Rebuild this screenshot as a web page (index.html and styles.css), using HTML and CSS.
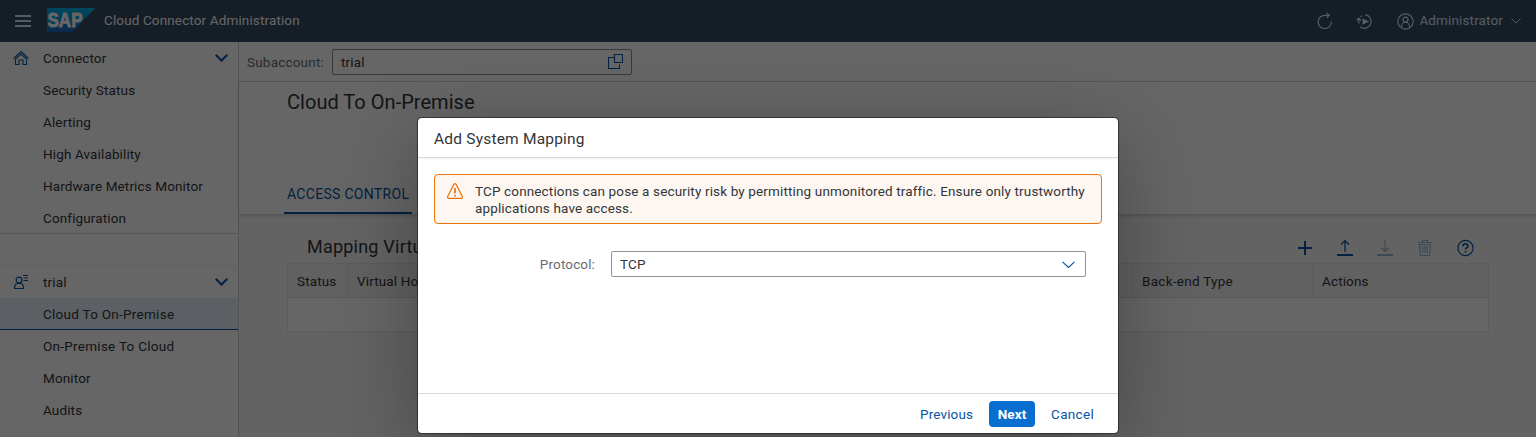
FILE: index.html
```html
<!DOCTYPE html>
<html lang="en">
<head>
<meta charset="utf-8">
<title>Cloud Connector Administration</title>
<link rel="stylesheet" href="styles.css">
</head>
<body>
<div class="app">
  <header class="shell">
    <svg class="menu" width="16" height="13" viewBox="0 0 16 13"><path d="M0 1h16M0 6h16M0 11h16" stroke="#d1e8ff" stroke-width="2"/></svg>
    <svg class="logo" width="49" height="24" viewBox="0 0 49 24">
      <defs><linearGradient id="sap" x1="0" y1="0" x2="0" y2="1"><stop offset="0" stop-color="#00b1eb"/><stop offset=".5" stop-color="#009ad9"/><stop offset="1" stop-color="#1e5fbb"/></linearGradient></defs>
      <path d="M0 0H48.500L25 24H0z" fill="url(#sap)"/>
      <text x="0.500" y="18.800" textLength="35" lengthAdjust="spacingAndGlyphs" class="logo-text">SAP</text>
    </svg>
    <span class="shell-title">Cloud Connector Administration</span>
    <div class="shell-end">
      <svg class="refresh" width="16" height="18" viewBox="0 0 16 18" fill="none" stroke="#d1e8ff" stroke-width="1.200"><path d="M14.300 9.500A6.600 6.600 0 1 1 7.700 3.300H12M9.700.800 12.200 3.300 9.700 5.800"/></svg>
      <svg class="replay" width="17" height="17" viewBox="0 0 17 17" fill="none" stroke="#d1e8ff" stroke-width="1.200"><path d="M9 1.700A6.800 6.800 0 1 1 4 13.700M2.800 5v5.500M.7 7.500l2.100-2.300 2.100 2.300M4.500 3.700l1.500-1"/><path d="M6.500 5.200 13 8.500 6.500 11.800z" fill="#d1e8ff" stroke="none"/></svg>
      <svg class="user" width="17" height="17" viewBox="0 0 17 17" fill="none" stroke="#d1e8ff" stroke-width="1.200"><circle cx="8.500" cy="8.500" r="7.700"/><circle cx="8.500" cy="6.700" r="2.500"/><path d="M4.500 14.200c0-3 1.800-5 4-5s4 2 4 5"/></svg>
      <span>Administrator</span>
      <svg class="caret" width="10" height="6" viewBox="0 0 10 6" fill="none" stroke="#d1e8ff"><path d="M.5.500 5 5 9.500.500"/></svg>
    </div>
  </header>
  <div class="body">
    <nav class="side">
      <div class="item top">
        <svg width="16" height="16" viewBox="0 0 16 16" fill="none" stroke="#0854a0" stroke-width="1.100"><path d="M.5 8.500 8 1.500l7.500 7M2.500 9v5.500h3.500V10h4v4.500h3.500V9L8 4z"/></svg>
        <span>Connector</span>
        <svg width="13" height="8" viewBox="0 0 13 8" fill="none" stroke="#0854a0" stroke-width="2"><path d="M.7.800 6.500 6.500 12.300.800"/></svg>
      </div>
      <div class="item">Security Status</div>
      <div class="item">Alerting</div>
      <div class="item">High Availability</div>
      <div class="item">Hardware Metrics Monitor</div>
      <div class="item last">Configuration</div>
      <div class="gap"></div>
      <div class="item top">
        <svg width="16" height="16" viewBox="0 0 16 16" fill="none" stroke="#0854a0" stroke-width="1.200"><circle cx="6" cy="6" r="2.900"/><path d="M1.500 14.500c0-3.400 1.800-4.800 2.700-5h3.600c.9.200 2.700 1.600 2.700 5zM10 1.500h5M10.500 4h4.500M10.500 6.500h4.500"/></svg>
        <span>trial</span>
        <svg width="13" height="8" viewBox="0 0 13 8" fill="none" stroke="#0854a0" stroke-width="2"><path d="M.7.800 6.500 6.500 12.300.800"/></svg>
      </div>
      <div class="item wide selected">Cloud To On-Premise</div>
      <div class="item wide">On-Premise To Cloud</div>
      <div class="item">Monitor</div>
      <div class="item">Audits</div>
    </nav>
    <main class="main">
      <div class="subbar">
        <span class="label sub-label">Subaccount:</span>
        <div class="input sub"><span>trial</span>
          <svg width="15" height="15" viewBox="0 0 15 15" fill="none" stroke="#0854a0"><path d="M6.500.500h8v8h-8zM6.500 3.500h-6v11h11v-4" stroke-width="1.100"/></svg>
        </div>
      </div>
      <div class="pagehead">
        <h1>Cloud To On-Premise</h1>
        <div class="tab">ACCESS CONTROL</div>
      </div>
      <section class="content">
        <div class="toolbar">
          <h2>Mapping Virtual To Internal System</h2>
          <div class="tools">
            <svg width="16" height="18" viewBox="0 0 16 18" stroke="#0854a0" stroke-width="2"><path d="M1 9h14M8 2v14"/></svg>
            <svg width="16" height="18" viewBox="0 0 16 18" fill="none" stroke="#0854a0"><path d="M8 13V1.500M4 5.500l4-4 4 4" stroke-width="1.200"/><path d="M0 16h16" stroke-width="2"/></svg>
            <svg class="off" width="16" height="18" viewBox="0 0 16 18" fill="none" stroke="#0854a0"><path d="M8 1v11.500M4 8.500l4 4 4-4" stroke-width="1.200"/><path d="M0 16h16" stroke-width="2"/></svg>
            <svg class="off" width="16" height="18" viewBox="0 0 16 18" fill="none" stroke="#0854a0" stroke-width="1.200"><path d="M1 3.500h14M5.500 3.500v-2h5v2M2.500 5.500l1 11h9l1-11zM5.500 7l.5 7M8 7v7M10.500 7l-.5 7"/></svg>
            <svg width="17" height="18" viewBox="0 0 17 18" fill="none" stroke="#0854a0" stroke-width="1.200"><circle cx="8.500" cy="9" r="7.600"/><path d="M6 7.200c0-3.300 5-3.200 5-.3 0 1.800-2.500 1.800-2.500 3.700M8.500 12v1.500" stroke-width="1.600"/></svg>
          </div>
        </div>
        <div class="table">
          <div class="thead"><span>Status</span><span>Virtual Host</span><span class="wide">Back-end Type</span><span>Actions</span></div>
          <div class="trow"></div>
        </div>
      </section>
    </main>
  </div>
</div>
<div class="overlay">
  <div class="dialog">
    <div class="dlg-head">Add System Mapping</div>
    <div class="dlg-body">
      <div class="strip">
        <svg width="16" height="16" viewBox="0 0 16 16" fill="none" stroke="#e9730c"><path d="M7 1.200Q8 .2 9 1.200L15.300 13.500Q15.700 15.300 14.300 15.400H1.700Q.3 15.300.7 13.500z" stroke-width="1.200"/><path d="M8 5v5.300M8 11.700v1.800" stroke-width="1.700"/></svg>
        <p>TCP connections can pose a security risk by permitting unmonitored traffic. Ensure only trustworthy<br>applications have access.</p>
      </div>
      <div class="field">
        <span class="label">Protocol:</span>
        <div class="input proto"><span>TCP</span>
          <svg width="13" height="8" viewBox="0 0 13 8" fill="none" stroke="#0854a0" stroke-width="1.100"><path d="M.5 1.800 6.500 7.500 12.500 1.800"/></svg>
        </div>
      </div>
    </div>
    <div class="dlg-foot"><span class="btn prev">Previous</span><span class="btn next">Next</span><span class="btn cancel">Cancel</span></div>
  </div>
</div>
</body>
</html>
```
FILE: styles.css
```css
* { box-sizing: border-box; }
body {
  margin: 0;
  height: 437px;
  overflow: hidden;
  position: relative;
  font: 13.5px/18px Roboto, "Liberation Sans", sans-serif;
  letter-spacing: 0.13px;
  color: #32363a;
}
svg { display: block; flex: none; }
.app { height: 437px; display: flex; flex-direction: column; }
.shell {
  height: 42px;
  flex: none;
  background: #354a5f;
  display: flex;
  align-items: center;
  padding: 0 15px;
  color: #fff;
}
.logo { margin: 0 8px 2px 16px; }
.logo-text { font: bold 21px "Liberation Sans", sans-serif; fill: #fff; stroke: #fff; stroke-width: 0.9px; letter-spacing: 0; }
.shell-title { margin-bottom: 3px; }
.shell-end { margin-left: auto; display: flex; align-items: center; color: #d1e8ff; }
.shell-end span { margin-bottom: 3px; }
.refresh { margin-right: 23px; }
.replay { margin-right: 24px; }
.user { margin-right: 5px; }
.caret { margin-left: 8px; }
.body { flex: 1; min-height: 0; display: flex; }
.side { width: 239px; flex: none; background: #fff; border-right: 1px solid #d0d0d0; }
.item { height: 32px; line-height: 32px; padding-left: 43px; }
.wide { letter-spacing: 0.27px; }
.top { padding: 0 10px 0 13px; display: flex; align-items: center; }
.top span { margin-left: 14px; flex: 1; }
.last { border-bottom: 1px solid #d9d9d9; }
.gap { height: 32px; border-bottom: 1px solid #f0f0f0; }
.selected { background: #e5f0fa; border-bottom: 1px solid #0854a0; }
.main { flex: 1; min-width: 0; background: #f7f7f7; display: flex; flex-direction: column; }
.subbar { height: 40px; flex: none; background: #fff; border-bottom: 1px solid #d9d9d9; display: flex; align-items: center; padding-left: 8px; }
.label { color: #6a6d70; }
.sub-label { width: 77px; letter-spacing: 0.2px; }
.input { height: 26px; border: 1px solid #89919a; border-radius: 2px; background: #fff; display: flex; align-items: center; justify-content: space-between; padding: 0 9px 0 8px; }
.sub { width: 300px; margin-left: 8px; padding-right: 8px; }
.pagehead { height: 133px; flex: none; background: #fff; border-bottom: 1px solid #d9d9d9; box-shadow: 0 1px 3px #0002; padding: 7px 0 0 48px; display: flex; flex-direction: column; justify-content: space-between; align-items: flex-start; }
h1 { margin: 0; font-size: 20px; line-height: 26px; font-weight: 400; letter-spacing: 0.03px; }
.tab { height: 36px; line-height: 33px; margin-left: -3px; width: 128px; padding-left: 3px; border-bottom: 2px solid #0854a0; color: #0854a0; white-space: nowrap; font-size: 14px; letter-spacing: 0.3px; }
.content { padding: 16px 47px 0 48px; }
.toolbar { height: 32px; display: flex; align-items: center; justify-content: space-between; padding: 0 15px 0 20px; }
h2 { margin: 0; font-size: 18px; font-weight: 400; letter-spacing: 0.22px; }
.tools { display: flex; gap: 24px; margin-top: 2px; }
.off { opacity: 0.4; }
.table { border: 1px solid #e5e5e5; height: 69px; background: #fff; }
.thead { height: 34px; line-height: 34px; background: #f2f2f2; border-bottom: 1px solid #e0e0e0; display: grid; grid-template-columns: 60px 785px 180px 1fr; }
.thead span { padding-left: 9px; border-right: 1px solid #e5e5e5; }
.thead span:last-child { border-right: 0; }
.overlay { position: absolute; inset: 0; background: rgba(0, 0, 0, 0.6); display: flex; align-items: flex-start; padding: 118px 0 0 418px; }
.dialog { width: 700px; height: 315px; background: #fff; border-radius: 4px; box-shadow: 0 0 0 1px rgba(0, 0, 0, 0.42), 0 20px 80px rgba(0, 0, 0, 0.3); display: flex; flex-direction: column; }
.dlg-head { height: 40px; flex: none; line-height: 42px; padding-left: 16px; font-size: 15.5px; letter-spacing: 0.2px; border-bottom: 1px solid #d9d9d9; box-shadow: 0 1px 3px #0001; }
.dlg-body { flex: 1; padding: 16px 16px 0; }
.strip { height: 50px; border: 1px solid #e9730c; border-radius: 4px; background: #fef7f1; padding: 8px 12px 0; display: flex; }
.strip p { margin: 0 0 0 12px; line-height: 17px; white-space: nowrap; letter-spacing: 0.14px; }
.field { display: flex; align-items: center; justify-content: flex-end; margin: 27px 16px 0 0; }
.proto { width: 475px; margin-left: 16px; padding-right: 10px; }
.dlg-foot { height: 40px; flex: none; border-top: 1px solid #d9d9d9; display: flex; align-items: center; justify-content: flex-end; padding-right: 24px; color: #0854a0; }
.cancel { letter-spacing: 0.3px; }
.next { background: #0a6ed1; color: #fff; font-weight: 700; width: 46px; height: 26px; line-height: 26px; text-align: center; border-radius: 4px; margin: 0 16px; }
```
